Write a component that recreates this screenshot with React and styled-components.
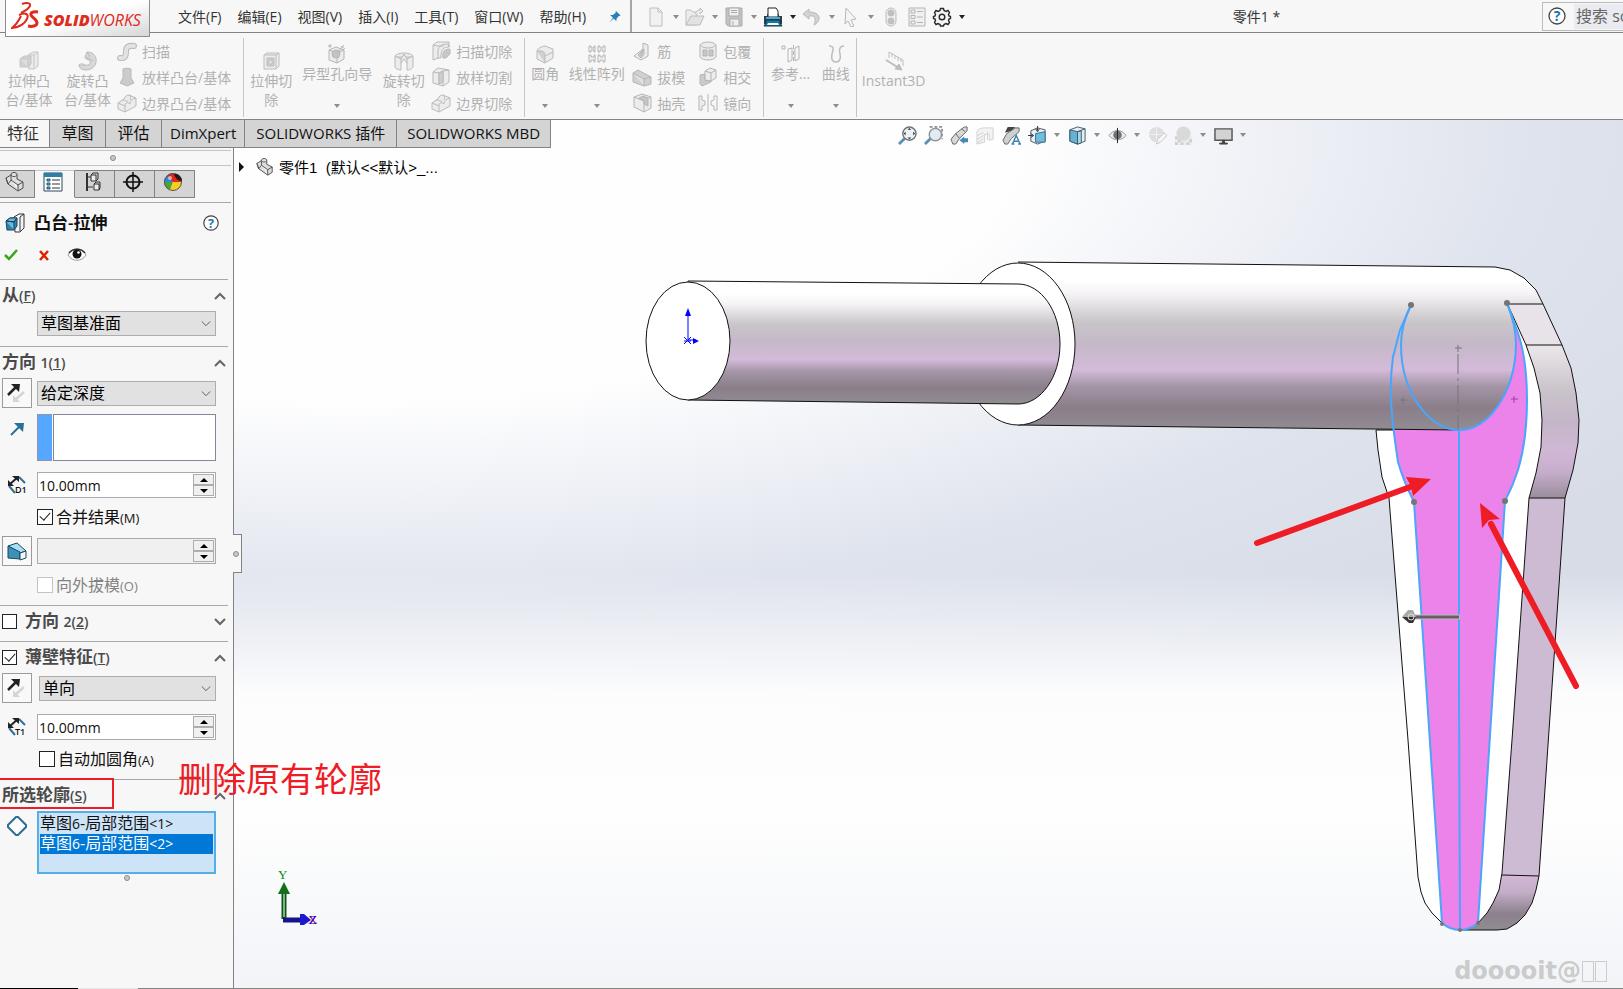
import styled, { createGlobalStyle } from "styled-components";

const GlobalStyle = createGlobalStyle`
  * {
    box-sizing: border-box;
  }

  body {
    margin: 0;
    font-family: "Open Sans", "Noto Sans CJK SC", sans-serif;
    font-size: 14px;
    color: #333;
    background: #f7f7f7;
    overflow: hidden;
  }

  button,
  input,
  select {
    font-family: inherit;
    margin: 0;
  }
`;

const Page = styled.div`
  display: flex;
  flex-direction: column;
  height: 100vh;
`;

/* ---------- title bar ---------- */

const TitleBar = styled.header`
  display: flex;
  align-items: center;
  height: 33px;
  flex: none;
  background: #f7f7f7;
  border-bottom: 1px solid #838383;
`;

const Brand = styled.a`
  display: flex;
  align-self: flex-start;
  width: 145px;
  height: 37px;
  flex: none;
  margin-left: 5px;
  padding-left: 5px;
  border: 1px solid #8e8e8e;
  border-top: 0;
  background: linear-gradient(165deg, #fff 50%, #d6d6d6);
  text-decoration: none;
  z-index: 1;
`;

const BrandName = styled.span`
  padding-top: 8px;
  font-size: 16px;
  line-height: 24px;
  font-style: italic;
  font-weight: ${(props) => (props.$light ? 400 : 800)};
  color: #dd2b1c;
`;

const Menu = styled.nav`
  display: flex;
  gap: 16px;
  padding: 2px 0 0 28px;
`;

const MenuItem = styled.button`
  padding: 0;
  border: 0;
  background: none;
  font-size: 14px;
  line-height: 20px;
  color: #333;
  white-space: nowrap;
`;

const PinButton = styled(MenuItem)`
  display: flex;
  margin: 2px 8px 0 22px;
`;

const QuickTools = styled.div`
  display: flex;
  align-items: center;
  height: 32px;
  padding: 2px 0 0 14px;
  border-left: 2px solid #a5a5a5;
`;

const ToolButton = styled.button`
  display: flex;
  align-items: center;
  justify-content: center;
  width: ${(props) => props.$width || 20}px;
  height: 24px;
  padding: 0;
  border: 0;
  background: none;
`;

const CaretButton = styled(ToolButton)`
  &::after {
    content: "";
    border: 3px solid transparent;
    border-top: 4px solid ${(props) => (props.$dim ? "#8d8d8d" : "#222")};
    border-bottom: 0;
  }
`;

const DocTitle = styled.h1`
  flex: 1;
  margin: 0;
  text-align: center;
  font-size: 14px;
  font-weight: 400;
`;

const Search = styled.label`
  display: flex;
  align-items: center;
  gap: 7px;
  width: 81px;
  height: 29px;
  flex: none;
  padding: 1px 0 1px 4px;
  border: 1px solid #bcbcbc;
  border-right: 0;
  overflow: hidden;
`;

const SearchInput = styled.input`
  width: 140px;
  height: 25px;
  flex: none;
  padding: 0 2px;
  border: 0;
  background: #eaebf0;
  font-size: 16px;

  &::placeholder {
    color: #666;
  }
`;

/* ---------- ribbon ---------- */

const Ribbon = styled.div`
  display: flex;
  height: 87px;
  flex: none;
  padding: 5px 0 2px;
  background: #f7f7f7;
  border-bottom: 1px solid #838383;
`;

const Group = styled.div`
  display: flex;
  padding: 0 ${(props) => props.$end || 0}px 0 0;
  border-right: 1px solid #c4c4c4;

  &:last-child {
    border-right: 0;
  }
`;

const BigButton = styled.button`
  display: flex;
  flex-direction: column;
  align-items: center;
  width: ${(props) => props.$width}px;
  padding: ${(props) => (props.$drop ? 6 : 13)}px 0 0;
  border: 0;
  background: none;
  font-size: 14px;
  line-height: 19px;
  color: #b1b1b1;
  white-space: pre;
`;

const DropMark = styled.span`
  margin-top: 21px;
  border: 3px solid transparent;
  border-top: 4px solid #8d8d8d;
  border-bottom: 0;
`;

const SmallColumn = styled.div`
  display: flex;
  flex-direction: column;
  margin: 0 ${(props) => props.$end || 0}px 0 ${(props) => props.$start || 0}px;
`;

const SmallButton = styled.button`
  display: flex;
  align-items: center;
  gap: 5px;
  height: 26px;
  padding: 0;
  border: 0;
  background: none;
  font-size: 14px;
  color: #b1b1b1;
  white-space: nowrap;
`;

/* ---------- workspace ---------- */

const Workspace = styled.main`
  display: flex;
  flex-direction: column;
  flex: 1;
  min-height: 0;
  background:
    linear-gradient(rgba(255, 255, 255, 0) 52%, rgba(254, 254, 254, 0.95) 66%, #fefefe 80%, #f2f4f8),
    radial-gradient(ellipse 1150px 450px at 350px 20px, #fefefe 58%, #f0f2f7 78%, #dfe3ed 103%, #d7dce7 135%);
`;

const TopStrip = styled.div`
  display: flex;
  height: 28px;
  flex: none;
`;

const TabBar = styled.div`
  display: flex;
`;

const Tab = styled.button`
  min-width: 56px;
  padding: 0 ${(props) => props.$pad || 11}px 2px;
  border: solid #838383;
  border-width: 0 1px 1px 0;
  background: ${(props) => (props.$active ? "#f7f7f7" : "#d4d4d4")};
  font-size: ${(props) => (props.$latin ? 15 : 16)}px;
  line-height: 24px;
  color: ${(props) => (props.$active ? "#333" : "#111")};
  white-space: nowrap;

  &:first-child {
    min-width: 0;
    padding: 0 10px 2px 7px;
  }
`;

const ViewTools = styled.div`
  display: flex;
  flex: 1;
  align-items: center;
  justify-content: center;
  padding: 2px 30px 0 0;
`;

const Body = styled.div`
  display: flex;
  flex: 1;
  min-height: 0;
`;

/* ---------- property panel ---------- */

const Panel = styled.aside`
  position: relative;
  width: 234px;
  flex: none;
  padding-top: 2px;
  background: #f7f7f7;
  border-right: 1px solid #838383;
`;

const Grip = styled.div`
  display: flex;
  align-items: center;
  justify-content: center;
  height: 16px;
  margin: 0 2px 4px 0;
  padding-right: 6px;
  border: solid #c4c4c4;
  border-width: 1px 0;
`;

const Dot = styled.span`
  width: 6px;
  height: 6px;
  border: 1px solid #8c8c8c;
  border-radius: 50%;
  background: #c8c8c8;
`;

const PanelTabs = styled.div`
  display: flex;
  height: 32px;
  margin-right: 2px;
`;

const PanelTab = styled.button`
  display: flex;
  align-items: center;
  justify-content: center;
  width: ${(props) => props.$width || 40}px;
  height: 28px;
  padding: 0 4px 4px 0;
  border: 1px solid #838383;
  border-left: 0;
  background: #d4d4d4;

  ${(props) =>
    props.$active &&
    `
    background: #f7f7f7;
    border-top-color: #c4c4c4;
    border-bottom-color: #f7f7f7;
  `}
`;

const FeatureTitle = styled.div`
  display: flex;
  align-items: center;
  height: 41px;
  margin-right: 2px;
  padding: 0 10px 0 5px;
  border-top: 1px solid #a9a9a9;
`;

const FeatureName = styled.h2`
  flex: 1;
  margin: 0 0 0 9px;
  font-size: 17px;
  line-height: 24px;
  font-weight: 600;
  color: #111;
`;

const Actions = styled.div`
  display: flex;
  gap: 13px;
  height: 36px;
  padding: 0 0 12px 1px;
`;

const Section = styled.section`
  margin-right: 5px;
  padding: 0 12px ${(props) => props.$end || 12}px 0;
  border-top: 1px solid #a9a9a9;
`;

const SectionHead = styled.div`
  display: flex;
  align-items: center;
  height: 31px;
  margin-right: -12px;
  padding: 0 0 0 2px;
`;

const SectionLabel = styled.label`
  flex: 1;
  margin-left: ${(props) => (props.$indent ? 8 : 0)}px;
  font-size: 17px;
  line-height: 24px;
  font-weight: 600;
  color: #4a4a4a;

  small {
    font-size: 14px;
  }
`;

const FoldButton = styled.button`
  display: flex;
  padding: 0 2px 0 0;
  border: 0;
  background: none;
`;

const Row = styled.div`
  display: grid;
  grid-template-columns: 35px minmax(0, 1fr);
  align-items: ${(props) => props.$align || "center"};
  padding-left: 2px;
  margin-top: ${(props) => (props.$first ? 0 : props.$tight ? 6 : 11)}px;
`;

const IconCell = styled.span`
  display: flex;
  justify-content: center;
  width: 30px;
  padding-top: ${(props) => props.$top || 0}px;
`;

const FrameButton = styled.button`
  display: flex;
  align-items: center;
  justify-content: center;
  width: 30px;
  height: 30px;
  padding: 0;
  border: 1px solid #9b9b9b;
  background: #f9f9f9;
`;

const SelectBox = styled.span`
  position: relative;
  display: block;
  margin-left: ${(props) => (props.$indent ? 2 : 0)}px;

  svg {
    position: absolute;
    top: 8px;
    right: 5px;
    pointer-events: none;
  }
`;

const Select = styled.select`
  appearance: none;
  display: block;
  width: 100%;
  height: 25px;
  padding: 0 20px 0 3px;
  border: 1px solid #adadad;
  border-radius: 0;
  background: #e1e1e1;
  font-size: 16px;
  line-height: 23px;
  color: #000;
`;

const PickField = styled.div`
  display: flex;
  gap: 1px;
  height: 47px;
`;

const PickColor = styled.span`
  width: 15px;
  flex: none;
  background: #55a7ff;
  border: 1px solid #8e95a8;
  border-right: 0;
`;

const PickInput = styled.input`
  flex: 1;
  min-width: 0;
  border: 1px solid #838799;
  background: #fff;
`;

const NumberField = styled.div`
  display: flex;
  height: 26px;
  padding: 1px;
  border: 1px solid #a9a9ae;
  background: ${(props) => (props.$disabled ? "#f0f0f0" : "#fff")};
`;

const NumberInput = styled.input`
  flex: 1;
  min-width: 0;
  padding: 0;
  border: 0;
  background: none;
  font-size: 14px;
  color: #111;
`;

const Spinner = styled.span`
  display: flex;
  flex-direction: column;
  width: 21px;
`;

const SpinButton = styled.button`
  display: flex;
  flex: 1;
  align-items: center;
  justify-content: center;
  padding: 0;
  border: 1px solid #adadad;
  background: #f0f0f0;

  &::after {
    content: "";
    border: 4px solid transparent;
    border-top: ${(props) => (props.$down ? "4px solid #000" : "0")};
    border-bottom: ${(props) => (props.$down ? "0" : "4px solid #000")};
  }
`;

const CheckInput = styled.input`
  appearance: none;
  display: block;
  width: ${(props) => props.$size || 16}px;
  height: ${(props) => props.$size || 16}px;
  flex: none;
  border: 1px solid #222;
  background: #fff;

  &:checked::after {
    content: "";
    display: block;
    width: 5px;
    height: 9px;
    margin: 0 auto;
    border: solid #222;
    border-width: 0 1px 1px 0;
    rotate: 42deg;
  }

  &:disabled {
    border-color: #c4c4c4;
  }
`;

const CheckLabel = styled.label`
  display: flex;
  align-items: center;
  gap: 3px;
  height: 16px;
  margin: 11px 0 0 ${(props) => (props.$indent ? 39 : 37)}px;
  font-size: 16px;
  line-height: 16px;
  color: ${(props) => (props.$disabled ? "#838383" : "#111")};
  white-space: nowrap;

  small {
    font-size: 13px;
  }
`;

const ContourList = styled.ul`
  height: 63px;
  margin: 0;
  padding: 1px;
  border: 2px solid #55aee6;
  background: #cde3f8;
  list-style: none;
`;

const ContourItem = styled.li`
  height: 20px;
  font-size: 16px;
  line-height: 18px;
  white-space: nowrap;
  color: ${(props) => (props.$selected ? "#fff" : "#111")};
  background: ${(props) => (props.$selected ? "#0078d7" : "none")};

  small {
    font-size: 14px;
  }
`;

const EndGrip = styled.div`
  display: flex;
  justify-content: center;
  padding: 1px 0 0 37px;
`;

const SplitHandle = styled.button`
  position: absolute;
  top: 386px;
  left: 233px;
  display: flex;
  align-items: center;
  width: 9px;
  height: 39px;
  padding: 0;
  border: 1px solid #838383;
  border-left: 0;
  background: #f7f7f7;
  z-index: 1;
`;

const ContourFrame = styled.span`
  position: absolute;
  left: -2px;
  bottom: 179px;
  width: 116px;
  height: 31px;
  border: 2px solid #ee1c25;
`;

const Note = styled.strong`
  position: absolute;
  left: 178px;
  bottom: 184px;
  font-size: 34px;
  line-height: 50px;
  font-weight: 400;
  color: #ee1c25;
  white-space: nowrap;
  z-index: 2;
`;

/* ---------- canvas ---------- */

const Canvas = styled.div`
  position: relative;
  flex: 1;
  min-width: 0;
`;

const Scene = styled.svg`
  display: block;
  width: 100%;
  height: 100%;
`;

const TreeRoot = styled.div`
  position: absolute;
  top: 6px;
  left: 5px;
  display: flex;
  align-items: center;
  font-size: 15px;
  line-height: 24px;
  color: #000;
  white-space: pre;
`;

const TreeArrow = styled.button`
  width: 5px;
  height: 10px;
  margin-right: 12px;
  padding: 0;
  border: solid transparent;
  border-width: 5px 0 5px 5px;
  border-left-color: #111;
  background: none;
`;

const TreeName = styled.span`
  padding: 2px 0 0 5px;
  font-family: "Liberation Sans", "Noto Sans CJK SC", sans-serif;
`;

const Watermark = styled.div`
  position: absolute;
  right: 16px;
  bottom: 1px;
  display: flex;
  align-items: center;
  gap: 1px;
  font-family: "DejaVu Sans", sans-serif;
  font-size: 24px;
  line-height: 32px;
  font-weight: 700;
  color: #cbcbcb;
`;

const BlankGlyph = styled.i`
  width: 12px;
  height: 21px;
  border: 1px solid #cbcbcb;
`;

const StatusLine = styled.div`
  height: 1px;
  flex: none;
  background: linear-gradient(90deg, #000 78px, #e6e6e6 78px 138px, #838383 138px);
`;

/* ---------- icons ---------- */

const IconSvg = styled.svg`
  display: block;
  flex: none;
`;

const G = "#c6c6c6";
const L = "#ececec";

const icons = {
  file: (
    <path d="M4 1h8l4 4v14H4zM12 1v4h4" fill="#f1f1f1" stroke="#bdbdbd" />
  ),
  open: (
    <g fill={L} stroke="#bdbdbd">
      <path d="M1 3h5l2 2h4v13H1z" />
      <path d="M1 18 6 9h13l-4 9z" fill="#e2e2e2" />
      <path d="M10 7c1-3 3-4 5-4V1l3 3-3 3V5" />
    </g>
  ),
  save: (
    <g stroke="#ababab">
      <path d="M2 1h16v18H4l-2-2z" fill="#c3c3c3" />
      <path d="M5 1h10v8H5zM6 12h9v7H6z" fill="#efefef" />
      <path d="M7 3.500h6M7 5.500h6M9 14v4" />
    </g>
  ),
  print: (
    <g>
      <path d="M5 1h8l2 3v6H5z" fill="#fff" stroke="#222" />
      <path d="M1 9h3V7h1v3h10V7h1v2h3v8H1z" fill="#2d3f4b" />
      <path d="M3 10h14v2H3z" fill="#52a7cf" />
      <path d="M3 13h14v3l2 3H1l2-3z" fill="#0f7aa6" stroke="#1d3543" />
      <path d="M5 16h10l1 2H4z" fill="#fff" />
    </g>
  ),
  undo: (
    <path d="M7 2 1 7l6 5V9c5-1 8 2 5 9 7-3 8-13-5-13z" fill="#d3d3d3" stroke="#b8b8b8" />
  ),
  pointer: <path d="m5 1 10 11-5 1 3 6-3 1-3-6-3 3z" fill="#f4f4f4" stroke="#b8b8b8" />,
  lights: (
    <g stroke="#bdbdbd">
      <rect x="5" y="1" width="10" height="18" rx="5" fill="#ededed" />
      <circle cx="10" cy="6" r="3" fill="#c1c1c1" />
      <circle cx="10" cy="14" r="3" fill="#c1c1c1" />
    </g>
  ),
  options: (
    <g stroke="#b4b4b4" fill="#f0f0f0">
      <path d="M2 1h16v18H2z" />
      <path d="M4 3h4v3H4zM4 8.500h4v3H4zM4 14h4v3H4zM10 4.500h6M10 10h6M10 15.500h6" />
    </g>
  ),
  gear: (
    <g fill="none" stroke="#2a2a2a">
      <path
        d="M8.500 1.500h3l.5 2 2 1 2-1 1.500 2-1 2 .5 1.500 1.500.5v2l-1.500.5-.5 1.500 1 2-1.500 2-2-1-2 1-.5 1.500h-3l-.5-1.500-2-1-2 1-1.500-2 1-2-.5-1.500-1.500-.5v-2l1.500-.5.5-1.500-1-2 1.500-2 2 1 2-1z"
        fill="#f4f4f4"
        strokeWidth="1.400"
      />
      <circle cx="10" cy="10" r="2.800" strokeWidth="1.400" />
    </g>
  ),
  pin: (
    <path d="m11 1 7 7-3 1-3 4v3l-4-4-6 6 5-7-4-4 4 0 4-3z" fill="#2680b5" />
  ),
  help: (
    <g>
      <circle cx="10" cy="10" r="8" fill="#fff" stroke="#444" strokeWidth="1.300" />
      <text x="10" y="15" textAnchor="middle" fontSize="14" fontWeight="700" fill="#2376a5">
        ?
      </text>
    </g>
  ),
  extrude: (
    <g stroke={G} fill={L}>
      <path d="m9 4 5-3h5v14l-4 3h-5z" />
      <path d="M15 4h-5v14M15 4v14M15 4l4-3" />
      <path d="m1 8 4-3h7v8l-3 3H1z" fill="#d2d2d2" />
      <path d="M1 8h8v8M9 8l3-3" fill="#dedede" />
    </g>
  ),
  revolve: (
    <g stroke="#bcbcbc" fill="#d8d8d8">
      <path d="M9 1c6 0 10 4 9 10s-6 8-10 8-7-2-7-5h6c3 1 6-1 5-4-1-2-5-1-5-4z" />
      <path d="m8 6 7 4M9 1l3 5M1 14c2-2 5-1 6 0" fill="none" />
    </g>
  ),
  sweep: (
    <g fill="none">
      <path d="M3 17c6 1 6-3 6-7s3-6 8-5" stroke="#b8b8b8" strokeWidth="6" strokeLinecap="round" />
      <path d="M3 17c6 1 6-3 6-7s3-6 8-5" stroke="#e2e2e2" strokeWidth="4" strokeLinecap="round" />
    </g>
  ),
  loft: (
    <path d="M6 2c2-1 6-1 8 0v9l3 5-7 3-7-3 3-5z" fill="#cbcbcb" stroke="#b9b9b9" />
  ),
  boundary: (
    <g fill={L} stroke="#bbb">
      <path d="m1 10 6-4c1-3 3-4 5-4l7 3v8l-11 6-7-3z" />
      <path d="m1 10 7 3v6M8 13c0-4 3-4 5-2 0-4 3-5 6-6M4 8c3-3 4 1 7 0M12 2c2 1 2 3 1 5" fill="none" />
    </g>
  ),
  cutExtrude: (
    <g stroke="#bdbdbd" fill={L}>
      <path d="m3 4 3-2h12v13l-3 3H3z" />
      <path d="M3 4h12v14M15 4l3-2" />
      <path d="M6 7h7v8H6z" fill="#cfcfcf" />
      <path d="M8 9h3v4H8z" />
    </g>
  ),
  hole: (
    <g stroke="#b5b5b5" fill={L}>
      <path d="m2 6 7-3 8 3v9l-7 4-8-3z" />
      <path d="m2 6 8 3v10M10 9l7-3" fill="none" />
      <circle cx="9" cy="10" r="4" fill="#c3c3c3" />
      <path d="m10 9 7-8M3 0v4M1 2h4M14 2l4 3" />
    </g>
  ),
  cutRevolve: (
    <g stroke="#b9b9b9" fill={L}>
      <path d="M1 5c2-4 16-4 18 0v11c-2 3-5 3-6 3v-7l-3-4-3 4v7c-2 0-5-1-6-3z" />
      <path d="m1 5 6 3 3-5 3 5 6-3M7 8v4M13 8v4" fill="#d5d5d5" />
    </g>
  ),
  cutSweep: (
    <g stroke="#b9b9b9" fill={L}>
      <path d="m2 4 4-3h12v5c-8 0-8 6-8 11H7l-5 2z" />
      <path d="M7 18V9c1-4 4-6 10-6l2 3M2 4l5 1h6" fill="none" />
      <path d="M12 17c-1-6 1-9 7-9v5l-4 4z" fill="#c8c8c8" />
    </g>
  ),
  cutLoft: (
    <g stroke="#b9b9b9" fill={L}>
      <path d="m2 5 5-4 11 2v12l-6 4-10-3z" />
      <path d="m2 5 6 1v11M8 6l4-2v15M12 4l6-1" fill="none" />
      <path d="m8 6 4-2v11l-4 2z" fill="#cecece" />
    </g>
  ),
  fillet: (
    <g stroke="#b9b9b9" fill={L}>
      <path d="M2 7c0-2 5-5 8-5l8 3v9l-8 5-8-4z" />
      <path d="M2 7h3c5 0 5 3 5 5v7M10 12l8-4" fill="#d0d0d0" />
    </g>
  ),
  pattern: (
    <path
      d="M2 2h2v2h3V2h1v6H7V6H4v2H2zM11 2h2v2h3V2h2v6h-2V6h-3v2h-2zM2 11h2v2h3v-2h1v7H7v-2H4v2H2zM11 11h2v2h3v-2h2v7h-2v-2h-3v2h-2z"
      fill="#f3f3f3"
      stroke="#b5b5b5"
    />
  ),
  rib: (
    <g stroke="#b5b5b5" fill={L}>
      <path d="m2 15 9-7V2l5 2v11l-7 4z" />
      <path d="m6 14 6-6v5l-3 4zM11 8l-2 7" fill="#ccc" />
    </g>
  ),
  draft: (
    <g stroke="#b5b5b5" fill="#d0d0d0">
      <path d="m1 6 5-3 13 7v7l-7 2-11-4z" />
      <path d="m1 6 11 6v7M12 12l7-2" fill="#e1e1e1" />
    </g>
  ),
  shell: (
    <g stroke="#b5b5b5" fill={L}>
      <path d="m2 4 8-3 9 3v11l-7 4-10-5z" />
      <path d="m2 4 10 4v11M12 8l7-4" fill="none" />
      <path d="m7 5 4-2 5 2v8l-4-2V8z" fill="#c5c5c5" />
    </g>
  ),
  wrap: (
    <g stroke="#b5b5b5" fill={L}>
      <path d="M2 4c3-4 13-4 16 0v12c-3 4-13 4-16 0z" />
      <path d="M2 4c3 4 13 4 16 0" fill="none" />
      <path d="M5 9h4v6H5zM11 9h4v6h-4z" fill="#c6c6c6" />
    </g>
  ),
  intersect: (
    <g stroke="#b5b5b5" fill={L}>
      <path d="m2 8 5-1v7l6-1v2l-9 4-2-2z" fill="#ccc" />
      <path d="m7 4 5-3 6 2v8l-5 3-6-1z" />
      <path d="m7 4 6 2v8M13 6l5-3" fill="none" />
    </g>
  ),
  mirror: (
    <g stroke="#b5b5b5" fill={L}>
      <path d="M1 3h3v4l3 1v4l-3 1v4H1z" />
      <path d="M19 3h-3v4l-3 1v4l3 1v4h3z" fill="#f7f7f7" />
      <path d="M10 1v18" />
    </g>
  ),
  reference: (
    <g stroke="#b5b5b5" fill="none">
      <path d="M1 2h3v3H1z" />
      <path d="m7 5 4-1v12l-4 2zM14 4l4-2v13l-4 2z" />
      <path d="M12.500 1v18" strokeDasharray="4 2" />
    </g>
  ),
  curve: <path d="M3 2c6 0 4 4 3 8-1 5 0 8 4 8s5-4 4-8c-1-3-1-8 4-8" fill="none" stroke="#bdbdbd" strokeWidth="1.500" />,
  instant: (
    <g stroke="#bdbdbd" fill="none">
      <path d="M5 7V1l14 8v6M8 3v3M11 5v3M14 6v4M17 8v3" />
      <path d="m2 9 13 8" strokeWidth="2" />
      <path d="m18 19-7-1 4-5z" fill="#bdbdbd" />
    </g>
  ),
  zoomFit: (
    <g>
      <path d="m1 19 7-7" stroke="#5c91b3" strokeWidth="3" />
      <circle cx="12" cy="8" r="7" fill="#edf2f4" stroke="#6b7378" strokeWidth="1.500" />
      <path d="m12 2 2 2h-4zM12 14l2-2h-4zM6 8l2-2v4zM18 8l-2-2v4z" fill="#333" />
    </g>
  ),
  zoomArea: (
    <g>
      <path d="m1 19 7-7" stroke="#5c91b3" strokeWidth="3" />
      <path d="M6 1h13v13" fill="none" stroke="#333" strokeDasharray="3 2" />
      <circle cx="12" cy="9" r="6.500" fill="#e1ebf0" stroke="#8a9499" strokeWidth="1.500" />
    </g>
  ),
  prevView: (
    <g stroke="#666">
      <path d="m1 14 5-6 9-7h3v4l-8 8-4 6H3z" fill="#d8d8d8" />
      <path d="m6 8 4 5M12 3l4 3" />
      <path d="m10 15 5-4v2h4v4h-4v2z" fill="#448ab5" stroke="none" />
    </g>
  ),
  section: (
    <g stroke="#d2d2d2" fill="#f3f3f3">
      <path d="M1 6c1-3 4-4 8-4h9v12l-4 1V9H9v8l-8 2z" />
      <path d="m1 10 7-3M1 14l7-4M1 18l7-5M12 6v9" />
    </g>
  ),
  annotations: (
    <g>
      <path d="m3 7 3-6h8l-3 3h3z" fill="#444" />
      <path d="m1 15 4-7 9-6h4v4l-8 7-4 6H3z" fill="#d0d0d0" stroke="#666" />
      <path d="m11 19 4-9 4 9M12 16h5M10 19h3M17 19h3" fill="none" stroke="#3984b4" strokeWidth="1.500" />
    </g>
  ),
  orientation: (
    <g>
      <path d="m3 5 7-3 8 2v12l-8 3-7-3z" fill="#e6f2f8" stroke="#555" />
      <path d="m8 8 10-2v11H8z" fill="#74bcdc" stroke="#2d6f92" />
      <path d="M10 0v5M8 3l2 3 2-3M0 10h5M3 8l3 2-3 2" fill="none" stroke="#333" />
    </g>
  ),
  display: (
    <g stroke="#3f5a68">
      <path d="m2 4 8-3 8 2v13l-8 3-8-3z" fill="#e7eef1" />
      <path d="m2 4 8 2v13l-8-3z" fill="#65b2d6" />
      <path d="m10 6 4-1v13l-4 1z" fill="#a7d7ed" />
      <path d="m10 6 8-3" />
    </g>
  ),
  eyeSplit: (
    <g>
      <path d="M1 10c5-7 13-7 18 0-5 6-13 6-18 0z" fill="#ededed" stroke="#999" />
      <circle cx="10" cy="9.500" r="4.500" fill="#707070" />
      <path d="M10 2v16" stroke="#222" />
    </g>
  ),
  appearance: (
    <g>
      <circle cx="9" cy="9" r="8" fill="#dedede" />
      <path d="M1 9h16M9 1v16" stroke="#efefef" />
      <path d="m9 19 1-5 7-7 3 3-7 7z" fill="#f5f5f5" stroke="#c4c4c4" />
    </g>
  ),
  scene: (
    <g>
      <path d="M1 11h18v9H1z" fill="#ececec" />
      <path d="M1 11h3v3H1zM7 17h3v3H7zM13 17h3v3h-3zM4 14h3v3H4zM16 14h3v3h-3zM1 17h3v3H1z" fill="#cecece" />
      <circle cx="10" cy="8" r="7.500" fill="#d9d9d9" />
    </g>
  ),
  monitor: (
    <g>
      <path d="M1 3h18v12H1z" fill="#d3d3d3" stroke="#555" strokeWidth="1.500" />
      <path d="M9 15h2v3h3v1H6v-1h3z" fill="#444" stroke="#444" />
    </g>
  ),
  part: (
    <g stroke="#4b4b4b" fill="#ddd" strokeLinejoin="round">
      <path d="M1 6 6 3V2c1-2 5-2 6 0v5l6 3v6l-5 3-10-7z" />
      <path d="M6 3v5l-3 4M6 8l7 5v6M13 13l5-3M6 3c1 2 5 2 6 0M1 6l2 6" fill="#f0f0f0" />
    </g>
  ),
  props: (
    <g>
      <path d="M1 1h18v18H1z" fill="#fff" stroke="#2b4a5b" />
      <path d="M1 1h18v4H1z" fill="#2c7fa8" />
      <path d="M4 7h3v2H4zM4 11h3v2H4zM4 15h3v2H4z" fill="#67b1d4" stroke="#22566f" />
      <path d="M9 8h8M9 12h8M9 16h8" stroke="#333" />
    </g>
  ),
  config: (
    <g stroke="#333" fill="#eee">
      <path d="M4 1v18" strokeWidth="2" />
      <path d="M4 5h4M4 15h6" />
      <path d="M8 3h5v6H8zM11 12h5v6h-5z" />
      <path d="m8 3 2-2h5v6l-2 2M11 12l2-2h4v6l-1 2" fill="none" />
    </g>
  ),
  target: (
    <g fill="none" stroke="#111" strokeWidth="2">
      <circle cx="10" cy="10" r="6.500" />
      <path d="M10 0v20M0 10h20" strokeWidth="1.500" />
    </g>
  ),
  ball: (
    <g>
      <path d="M10 10V1a9 9 0 0 0-9 9z" fill="#2c8bd8" />
      <path d="M10 10h9a9 9 0 0 0-15-6z" fill="#e3241c" />
      <path d="M1 10a9 9 0 0 0 6 8l3-8z" fill="#4aa535" />
      <path d="M7 18a9 9 0 0 0 12-8h-9z" fill="#f4cf22" />
      <circle cx="10" cy="10" r="8.500" fill="none" stroke="#555" />
      <path d="M11 2c4-1 8 3 8 7-4 0-7-3-8-7z" fill="#211b1b" />
      <circle cx="7" cy="6" r="2" fill="#fff" opacity=".6" />
    </g>
  ),
  boss: (
    <g stroke="#333">
      <path d="m9 4 5-3h5v14l-4 4h-5z" fill="#f4f4f4" />
      <path d="M15 4v14M15 4l4-3" fill="none" />
      <path d="m1 8 4-3h7v8l-3 4H2z" fill="#2e84ad" stroke="#14455e" />
      <path d="m1 8 8 1v8M9 9l3-4M1 8l4-3h7L9 9z" fill="#71b9da" stroke="#14455e" />
    </g>
  ),
  ok: <path d="m4 10 4 4 8-9" fill="none" stroke="#3aa51e" strokeWidth="2.500" />,
  cancel: <path d="m6 6 8 9M14 6l-8 9" fill="none" stroke="#e02200" strokeWidth="2.500" />,
  eye: (
    <g>
      <path d="M1 10C5 2 15 2 19 10c-4 7-14 7-18 0z" fill="#fff" stroke="#999" />
      <path d="M2 8C6 3 14 3 18 8" fill="none" stroke="#333" strokeWidth="1.500" />
      <circle cx="10" cy="9" r="4.500" fill="#111" />
      <circle cx="11.500" cy="7.500" r="1.300" fill="#fff" />
    </g>
  ),
  swap: (
    <g>
      <path d="m17 9-9 8" stroke="#d5d5d5" strokeWidth="2.500" />
      <path d="M6 12v7h7z" fill="#d5d5d5" />
      <path d="m1 12 8-8" stroke="#222" strokeWidth="2.500" />
      <path d="M4 1h9l-1 8z" fill="#222" />
    </g>
  ),
  direction: (
    <g>
      <path d="m4 16 8-8" stroke="#2b7197" strokeWidth="2" />
      <path d="M7 4h10l-1 9z" fill="#2b7197" />
    </g>
  ),
  draftBlue: (
    <g stroke="#174a63" strokeLinejoin="round">
      <path d="m1 5 9-3 9 8-6 2z" fill="#a9dff3" />
      <path d="m1 5 12 6v7L1 17z" fill="#3d90b8" />
      <path d="m13 12 6-2v7l-6 2z" fill="#f5f5f5" />
    </g>
  ),
  diamond: <path d="M9 1h2l8 8v2l-8 8H9l-8-8V9z" fill="#fdfdfd" stroke="#306e91" strokeWidth="2" />,
};

function Icon({ name, size = 20 }) {
  return (
    <IconSvg width={size} height={size} viewBox="0 0 20 20" aria-hidden="true">
      {icons[name]}
    </IconSvg>
  );
}

function DepthIcon({ tag }) {
  return (
    <IconSvg width="20" height="20" viewBox="0 0 20 20" aria-hidden="true">
      <path d="m2 11 6 7M12 2l6 6" stroke="#2b7197" strokeWidth="2" />
      <path d="m3 9 8-7" stroke="#222" strokeWidth="2" />
      <path d="M5 1h7v6zM1 5v6h6z" fill="#222" />
      <text x="8" y="18" fontSize="9" fontWeight="600" fill="#111">
        {tag}
      </text>
    </IconSvg>
  );
}

function Chevron({ down, size = 12, color = "#666", width = 2 }) {
  return (
    <IconSvg width={size} height={size} viewBox="0 0 12 12" aria-hidden="true">
      <path d={down ? "m1 3 5 5 5-5" : "m1 9 5-5 5 5"} fill="none" stroke={color} strokeWidth={width} />
    </IconSvg>
  );
}

/* ---------- pieces ---------- */

const menus = ["文件(F)", "编辑(E)", "视图(V)", "插入(I)", "工具(T)", "窗口(W)", "帮助(H)"];

const quick = [
  { icon: "file", label: "新建", dim: true },
  { icon: "open", label: "打开", dim: true },
  { icon: "save", label: "保存", dim: true },
  { icon: "print", label: "打印" },
  { icon: "undo", label: "撤消", dim: true },
  { icon: "pointer", label: "选择", dim: true },
];

const views = [
  { icon: "zoomFit", label: "整屏显示全图" },
  { icon: "zoomArea", label: "局部放大" },
  { icon: "prevView", label: "上一视图" },
  { icon: "section", label: "剖面视图" },
  { icon: "annotations", label: "动态注解视图" },
  { icon: "orientation", label: "视图定向", drop: true },
  { icon: "display", label: "显示样式", drop: true },
  { icon: "eyeSplit", label: "隐藏/显示项目", drop: true },
  { icon: "appearance", label: "编辑外观" },
  { icon: "scene", label: "应用布景", drop: true },
  { icon: "monitor", label: "视图设定", drop: true },
];

const ToolPair = styled.span`
  display: contents;
`;

function Big({ icon, text, width, drop }) {
  return (
    <BigButton $width={width} $drop={drop}>
      <Icon name={icon} />
      <span>{text}</span>
      {drop && <DropMark />}
    </BigButton>
  );
}

function Smalls({ items, start, end }) {
  return (
    <SmallColumn $start={start} $end={end}>
      {items.map(([icon, text]) => (
        <SmallButton key={text}>
          <Icon name={icon} />
          {text}
        </SmallButton>
      ))}
    </SmallColumn>
  );
}

function Combo({ label, value, indent }) {
  return (
    <SelectBox $indent={indent}>
      <Select aria-label={label} defaultValue={value}>
        <option>{value}</option>
      </Select>
      <Chevron down size={10} color="#444" width={1} />
    </SelectBox>
  );
}

function Stepper({ label, value, disabled }) {
  return (
    <NumberField $disabled={disabled}>
      <NumberInput aria-label={label} defaultValue={value} disabled={disabled} />
      <Spinner>
        <SpinButton aria-label="增加" />
        <SpinButton aria-label="减少" $down />
      </Spinner>
    </NumberField>
  );
}

function Head({ text, hotkey, check, checked, closed }) {
  return (
    <SectionHead>
      {check && <CheckInput type="checkbox" id={check} $size={15} defaultChecked={checked} />}
      <SectionLabel htmlFor={check} $indent={!!check} as={check ? "label" : "span"}>
        {text}
        <small>
          (<u>{hotkey}</u>)
        </small>
      </SectionLabel>
      <FoldButton aria-label={closed ? "展开" : "折叠"}>
        <Chevron down={closed} />
      </FoldButton>
    </SectionHead>
  );
}

function PropertyPanel() {
  return (
    <Panel>
      <Grip>
        <Dot />
      </Grip>
      <PanelTabs>
        <PanelTab aria-label="设计树" $width={35}>
          <Icon name="part" />
        </PanelTab>
        <PanelTab aria-label="属性" $active>
          <Icon name="props" />
        </PanelTab>
        <PanelTab aria-label="配置">
          <Icon name="config" />
        </PanelTab>
        <PanelTab aria-label="尺寸专家">
          <Icon name="target" />
        </PanelTab>
        <PanelTab aria-label="外观">
          <Icon name="ball" />
        </PanelTab>
      </PanelTabs>

      <FeatureTitle>
        <Icon name="boss" />
        <FeatureName>凸台-拉伸</FeatureName>
        <ToolButton aria-label="帮助">
          <Icon name="help" size={18} />
        </ToolButton>
      </FeatureTitle>
      <Actions>
        <ToolButton aria-label="确定">
          <Icon name="ok" />
        </ToolButton>
        <ToolButton aria-label="取消">
          <Icon name="cancel" />
        </ToolButton>
        <ToolButton aria-label="预览">
          <Icon name="eye" />
        </ToolButton>
      </Actions>

      <Section $end={10}>
        <Head text="从" hotkey="F" />
        <Row $first>
          <span />
          <Combo label="从" value="草图基准面" />
        </Row>
      </Section>

      <Section>
        <Head text={<>方向 <small>1</small></>} hotkey="1" />
        <Row $first>
          <FrameButton aria-label="反向">
            <Icon name="swap" />
          </FrameButton>
          <Combo label="终止条件" value="给定深度" />
        </Row>
        <Row $tight $align="start">
          <IconCell $top={5}>
            <Icon name="direction" />
          </IconCell>
          <PickField>
            <PickColor />
            <PickInput aria-label="拉伸方向" />
          </PickField>
        </Row>
        <Row>
          <IconCell>
            <DepthIcon tag="D1" />
          </IconCell>
          <Stepper label="深度" value="10.00mm" />
        </Row>
        <CheckLabel>
          <CheckInput type="checkbox" defaultChecked />
          <span>
            合并结果<small>(M)</small>
          </span>
        </CheckLabel>
        <Row>
          <FrameButton aria-label="拔模">
            <Icon name="draftBlue" />
          </FrameButton>
          <Stepper label="拔模角度" value="" disabled />
        </Row>
        <CheckLabel $disabled>
          <CheckInput type="checkbox" disabled />
          <span>
            向外拔模<small>(O)</small>
          </span>
        </CheckLabel>
      </Section>

      <Section $end={4}>
        <Head text={<>方向 <small>2</small></>} hotkey="2" check="dir2" closed />
      </Section>

      <Section>
        <Head text="薄壁特征" hotkey="T" check="thin" checked />
        <Row $first>
          <FrameButton aria-label="反向">
            <Icon name="swap" />
          </FrameButton>
          <Combo label="类型" value="单向" indent />
        </Row>
        <Row>
          <IconCell>
            <DepthIcon tag="T1" />
          </IconCell>
          <Stepper label="厚度" value="10.00mm" />
        </Row>
        <CheckLabel $indent>
          <CheckInput type="checkbox" />
          <span>
            自动加圆角<small>(A)</small>
          </span>
        </CheckLabel>
      </Section>

      <Section>
        <Head text="所选轮廓" hotkey="S" />
        <Row $first $align="start">
          <IconCell $top={5}>
            <Icon name="diamond" />
          </IconCell>
          <ContourList>
            <ContourItem>
              草图<small>6</small>-局部范围<small>&lt;1&gt;</small>
            </ContourItem>
            <ContourItem $selected>
              草图<small>6</small>-局部范围<small>&lt;2&gt;</small>
            </ContourItem>
          </ContourList>
        </Row>
        <EndGrip>
          <Dot />
        </EndGrip>
      </Section>

      <SplitHandle aria-label="折叠面板">
        <Dot />
      </SplitHandle>
      <ContourFrame />
      <Note>删除原有轮廓</Note>
    </Panel>
  );
}

const shade = [
  [0, "#ffffff"],
  [0.1, "#ffffff"],
  [0.18, "#f5f3f6"],
  [0.35, "#c9c5c9"],
  [0.49, "#c5b8c9"],
  [0.64, "#d4bbda"],
  [0.74, "#a596a7"],
  [0.87, "#8a7e89"],
  [1, "#918c92"],
];

function Shade({ id, y1, y2, stops = shade }) {
  return (
    <linearGradient id={id} gradientUnits="userSpaceOnUse" x1="0" x2="0" y1={y1} y2={y2}>
      {stops.map(([offset, color]) => (
        <stop key={offset} offset={offset} stopColor={color} />
      ))}
    </linearGradient>
  );
}

function Model() {
  const sketch =
    "M1411 305 1400 330 1393 357Q1390 378 1391 400T1398 462Q1403 480 1414 502L1442 923Q1450 930 1460 930T1478 923L1505 501Q1513 486 1518 470 1527 440 1527 400T1518 333L1507 303";
  const hole = "Q1516 325 1516 345C1515 392 1489 430 1459 430S1401 392 1401 345Q1401 325 1411 305";

  return (
    <Scene viewBox="234 148 1389 840" preserveAspectRatio="xMinYMin meet">
      <defs>
        <Shade id="thin-rod" y1={282} y2={403} />
        <Shade id="thick-rod" y1={264} y2={429} />
        <Shade
          id="edge"
          y1={345}
          y2={498}
          stops={[
            [0, "#ebe8eb"],
            [0.3, "#c9c3ca"],
            [0.5, "#c4b6c8"],
            [0.7, "#d0b7d6"],
            [0.83, "#c5aecb"],
            [1, "#9a8d9c"],
          ]}
        />
        <Shade
          id="foot"
          y1={876}
          y2={930}
          stops={[
            [0, "#d1b8d6"],
            [0.3, "#c3adc8"],
            [0.7, "#8c818c"],
            [1, "#918c92"],
          ]}
        />
      </defs>

      <g strokeLinejoin="round">
        {/* side of the arm */}
        <path d="M1507 303 1543 304 1562 345 1526 345z" fill="#e8e3e9" />
        <path
          d="M1526 345H1562L1571 368 1576 393 1579 420 1578 443 1573 470 1565 498H1529L1536 473 1541 447 1542 420 1540 393z"
          fill="url(#edge)"
        />
        <path d="M1529 498H1565L1539 876H1502z" fill="#cdbad3" />
        <path d="M1502 875H1539L1536 890 1532 903 1525 915 1517 923 1507 929 1497 930H1460L1478 910z" fill="url(#foot)" />

        {/* front face of the arm */}
        <path
          d="M1507 303 1526 345 1534 368 1540 393 1542 420 1541 447 1536 473 1529 498 1512 740 1502 873 1499 890 1493 903 1487 913 1478 923 1460 930 1442 923 1432 913 1425 903 1421 892 1418 877 1408 740 1389 498 1382 477 1378 450 1376 430H1459z"
          fill="#fff"
          stroke="#111"
        />
        <path
          d="M1543 304 1562 345 1571 368 1576 393 1579 420 1578 443 1573 470 1565 498 1539 876 1536 890 1532 903 1525 915 1517 923 1507 929 1497 930H1460M1526 345H1562M1529 498H1565M1502 875 1539 876"
          fill="none"
          stroke="#111"
        />
        <path d={sketch + "z"} fill="#eb83ea" />

        {/* thick rod */}
        <path
          d={`M1018 262 1495 267 1510 270 1524 278 1536 290 1543 304 1507 303${hole.split("S")[0]}L1018 425z`}
          fill="url(#thick-rod)"
        />
        <path d="M1018 262 1495 267 1510 270 1524 278 1536 290 1543 304H1507M1018 425 1459 430" fill="none" stroke="#111" />
        <ellipse cx="1018" cy="344" rx="57" ry="81" fill="#fff" stroke="#111" />

        {/* thin rod */}
        <path
          d="M688 281 1018 284C1041 284 1060 311 1060 344S1041 404 1018 404L688 400z"
          fill="url(#thin-rod)"
          stroke="#111"
        />
        <ellipse cx="688" cy="341" rx="42" ry="59" fill="#fff" stroke="#111" />
      </g>

      {/* sketch lines */}
      <g fill="none" stroke="#4aa5fb" strokeWidth="2">
        <path d={sketch} />
        <path d={"M1507 303" + hole} />
        <path d="M1459 430V690L1460 930" />
      </g>
      <g stroke="#777">
        <path d="M1458 354V430" strokeDasharray="20 4 3 4" />
        <path d="M1455 348H1462M1458 345V352M1400 400H1407M1403 397V404" />
        <path d="M1511 399H1518M1514 396V403" stroke="#a23fa5" />
      </g>
      <g fill="#757575">
        <circle cx="1411" cy="305" r="3" />
        <circle cx="1507" cy="303" r="3" />
        <circle cx="1414" cy="502" r="3" />
        <circle cx="1505" cy="501" r="3" />
        <circle cx="1442" cy="924" r="2" />
        <circle cx="1478" cy="923" r="2" />
        <circle cx="1460" cy="930" r="2" />
      </g>

      {/* drag handle */}
      <path d="M1412 617H1460" stroke="#bdbdbd" strokeWidth="5" />
      <path d="M1412 617H1459" stroke="#6a5c6c" strokeWidth="3" />
      <path d="M1402 617 1408 610H1413L1416 617z" fill="#aaa" />
      <path d="M1402 617 1409 623H1413L1416 617z" fill="#333" />
      <circle cx="1411" cy="617" r="3" fill="none" stroke="#ddd" />

      {/* origin */}
      <g stroke="#00f" fill="#00f">
        <path d="M688 340V314M688 340H696M684 337 691 344M691 337 684 344M684 341H691" />
        <path d="M688 308 691 316H685zM699 341 693 338V344z" stroke="none" />
      </g>

      {/* callout arrows */}
      <g stroke="#ee1c25" fill="#ee1c25" strokeWidth="6" strokeLinecap="round">
        <path d="M1257 543 1410 487M1576 686 1491 524" />
        <path d="M1431 479 1406 477 1411 486 1413 496zM1480 503 1500 519 1489 520 1482 528z" stroke="none" />
      </g>

      {/* axis triad */}
      <path d="M284 919V892" stroke="#14521a" strokeWidth="5" />
      <path d="M284 917V893" stroke="#77b77b" strokeWidth="2" />
      <path d="M284 882 290 894H278z" fill="#137018" />
      <path d="M283 920H302" stroke="#13138c" strokeWidth="5" />
      <path d="M300 914 304 914 311 920 304 925H300z" fill="#1a1ad0" />
      <g fontFamily="Liberation Serif, serif" fontSize="13">
        <text x="278" y="879" fill="#0a8a0a">
          Y
        </text>
        <text x="308" y="924" fill="#e01010">
          X
        </text>
        <text x="309" y="924" fill="#0000ff">
          Z
        </text>
      </g>
    </Scene>
  );
}

export default function App() {
  return (
    <>
      <GlobalStyle />
      <Page>
        <TitleBar>
          <Brand href="#" aria-label="SOLIDWORKS">
            <IconSvg width="33" height="33" viewBox="0 0 33 33" fill="none" stroke="#dd2b1c" strokeWidth="2">
              <path d="M11 4c5-2 9-1 8 2-1 2-5 5-9 7" />
              <path d="M8 15c7-3 10-1 8 4-2 4-7 8-15 9 4-3 6-6 9-12" />
              <path d="M27 12c-5-1-8 1-7 3 1 3 6 4 6 8 0 3-5 4-9 3" strokeWidth="3" />
            </IconSvg>
            <BrandName>SOLID</BrandName>
            <BrandName $light>WORKS</BrandName>
          </Brand>
          <Menu>
            {menus.map((item) => (
              <MenuItem key={item}>{item}</MenuItem>
            ))}
          </Menu>
          <PinButton aria-label="固定菜单">
            <Icon name="pin" size={14} />
          </PinButton>
          <QuickTools>
            {quick.map((tool) => (
              <ToolPair key={tool.icon}>
                <ToolButton aria-label={tool.label}>
                  <Icon name={tool.icon} />
                </ToolButton>
                <CaretButton $width={19} $dim={tool.dim} aria-label={tool.label + "选项"} />
              </ToolPair>
            ))}
            <ToolButton $width={22} aria-label="重建模型">
              <Icon name="lights" />
            </ToolButton>
            <ToolButton $width={30} aria-label="文件属性">
              <Icon name="options" />
            </ToolButton>
            <ToolButton aria-label="选项">
              <Icon name="gear" />
            </ToolButton>
            <CaretButton $width={19} aria-label="选项菜单" />
          </QuickTools>
          <DocTitle>零件1 *</DocTitle>
          <Search>
            <Icon name="help" />
            <SearchInput type="search" placeholder="搜索 solidworks" />
          </Search>
        </TitleBar>

        <Ribbon>
          <Group $end={12}>
            <Big icon="extrude" text={"拉伸凸\n台/基体"} width={58} />
            <Big icon="revolve" text={"旋转凸\n台/基体"} width={59} />
            <Smalls
              items={[
                ["sweep", "扫描"],
                ["loft", "放样凸台/基体"],
                ["boundary", "边界凸台/基体"],
              ]}
            />
          </Group>
          <Group $end={12}>
            <Big icon="cutExtrude" text={"拉伸切\n除"} width={54} />
            <Big icon="hole" text="异型孔向导" width={78} drop />
            <Big icon="cutRevolve" text={"旋转切\n除"} width={55} />
            <Smalls
              items={[
                ["cutSweep", "扫描切除"],
                ["cutLoft", "放样切割"],
                ["boundary", "边界切除"],
              ]}
            />
          </Group>
          <Group $end={12}>
            <Big icon="fillet" text="圆角" width={40} drop />
            <Big icon="pattern" text="线性阵列" width={63} drop />
            <Smalls
              start={4}
              end={13}
              items={[
                ["rib", "筋"],
                ["draft", "拔模"],
                ["shell", "抽壳"],
              ]}
            />
            <Smalls
              items={[
                ["wrap", "包覆"],
                ["intersect", "相交"],
                ["mirror", "镜向"],
              ]}
            />
          </Group>
          <Group $end={2}>
            <Big icon="reference" text="参考..." width={53} drop />
            <Big icon="curve" text="曲线" width={37} drop />
          </Group>
          <Group>
            <Big icon="instant" text="Instant3D" width={73} />
          </Group>
        </Ribbon>

        <Workspace>
          <TopStrip>
            <TabBar>
              <Tab $active>特征</Tab>
              <Tab>草图</Tab>
              <Tab>评估</Tab>
              <Tab $latin $pad={8}>DimXpert</Tab>
              <Tab $latin>SOLIDWORKS 插件</Tab>
              <Tab $latin $pad={10}>SOLIDWORKS MBD</Tab>
            </TabBar>
            <ViewTools>
              {views.map((view) => (
                <ToolPair key={view.icon}>
                  <ToolButton $width={26} aria-label={view.label}>
                    <Icon name={view.icon} size={19} />
                  </ToolButton>
                  {view.drop && <CaretButton $width={14} $dim aria-label={view.label + "选项"} />}
                </ToolPair>
              ))}
            </ViewTools>
          </TopStrip>
          <Body>
            <PropertyPanel />
            <Canvas>
              <Model />
              <TreeRoot>
                <TreeArrow aria-label="展开设计树" />
                <Icon name="part" size={18} />
                <TreeName>{"零件1  (默认<<默认>_..."}</TreeName>
              </TreeRoot>
              <Watermark>
                dooooit@
                <BlankGlyph />
                <BlankGlyph />
              </Watermark>
            </Canvas>
          </Body>
        </Workspace>
        <StatusLine />
      </Page>
    </>
  );
}
